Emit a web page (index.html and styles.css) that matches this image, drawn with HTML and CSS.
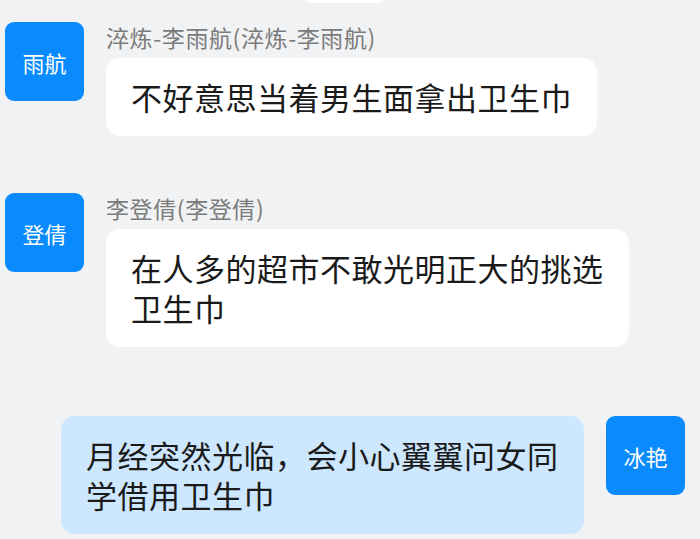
FILE: index.html
```html
<!DOCTYPE html>
<html lang="zh-CN">
<head>
    <meta charset="UTF-8">
    <meta name="viewport" content="width=device-width, initial-scale=1.0">
    <title>聊天记录</title>
    <link rel="stylesheet" href="styles.css">
</head>
<body>
<div class="chat">

    <!-- 上一条消息的尾部 -->
    <div class="prev-tail"></div>

    <div class="msg">
        <div class="avatar">雨航</div>
        <div class="content">
            <div class="name">淬炼-李雨航(淬炼-李雨航)</div>
            <div class="bubble">不好意思当着男生面拿出卫生巾</div>
        </div>
    </div>

    <div class="msg">
        <div class="avatar">登倩</div>
        <div class="content">
            <div class="name">李登倩(李登倩)</div>
            <div class="bubble">在人多的超市不敢光明正大的挑选卫生巾</div>
        </div>
    </div>

    <!-- 自己发的 -->
    <div class="msg mine">
        <div class="content">
            <div class="bubble">月经突然光临，会小心翼翼问女同学借用卫生巾</div>
        </div>
        <div class="avatar">冰艳</div>
    </div>

</div>
</body>
</html>
```

FILE: styles.css
```css
body {
    margin: 0;
    padding: 0;
    background-color: #f1f2f4;
    font-family: "Noto Sans CJK SC", "Noto Sans", sans-serif;
    overflow: hidden;
}

.chat {
    width: 700px;
    padding-top: 1px;
}

.prev-tail {
    width: 83px;
    height: 16px;
    margin: -14px 0 0 303px;
    background: #fff;
    border-radius: 13px;
}

.msg {
    display: flex;
    align-items: flex-start;
    gap: 22px;
    padding-left: 5px;
    margin-top: 19px;
}

.msg + .msg {
    margin-top: 57px;
}

.msg.mine {
    margin-top: 69px;
    justify-content: flex-end;
    padding-left: 0;
    padding-right: 15px;
}

.avatar {
    flex: none;
    width: 79px;
    height: 79px;
    border-radius: 9px;
    background-color: #0a8bfd;
    color: #fff;
    font-size: 22px;
    display: flex;
    align-items: center;
    justify-content: center;
}

.content {
    display: flex;
    flex-direction: column;
    align-items: flex-start;
}

.name {
    font-size: 23px;
    line-height: 30px;
    letter-spacing: 0.6px;
    word-spacing: 2px;
    color: #7b7b7b;
    margin-bottom: 6px;
}

.bubble {
    max-width: 473px;
    padding: 19px 25px;
    background: #fff;
    border-radius: 14px;
    font-size: 31px;
    line-height: 40px;
    letter-spacing: 0.5px;
    color: #1a1a1a;
}

.mine .bubble {
    background: #cce7fe;
}
```
